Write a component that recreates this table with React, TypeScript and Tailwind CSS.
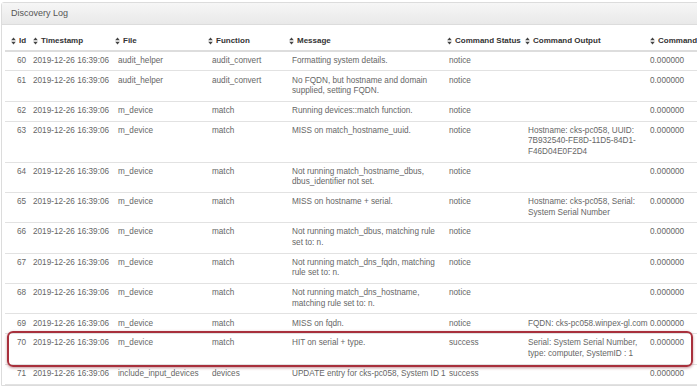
import React from "react";

type Row = {
  id: number;
  file: string;
  fn: string;
  message: string[];
  status: string;
  output?: string[];
  highlight?: boolean;
};

const TS = "2019-12-26 16:39:06";

const rows: Row[] = [
  { id: 60, file: "audit_helper", fn: "audit_convert", message: ["Formatting system details."], status: "notice" },
  {
    id: 61,
    file: "audit_helper",
    fn: "audit_convert",
    message: ["No FQDN, but hostname and domain", "supplied, setting FQDN."],
    status: "notice",
  },
  { id: 62, file: "m_device", fn: "match", message: ["Running devices::match function."], status: "notice" },
  {
    id: 63,
    file: "m_device",
    fn: "match",
    message: ["MISS on match_hostname_uuid."],
    status: "notice",
    output: ["Hostname: cks-pc058, UUID:", "7B932540-FE8D-11D5-84D1-", "F46D04E0F2D4"],
  },
  {
    id: 64,
    file: "m_device",
    fn: "match",
    message: ["Not running match_hostname_dbus,", "dbus_identifier not set."],
    status: "notice",
  },
  {
    id: 65,
    file: "m_device",
    fn: "match",
    message: ["MISS on hostname + serial."],
    status: "notice",
    output: ["Hostname: cks-pc058, Serial:", "System Serial Number"],
  },
  {
    id: 66,
    file: "m_device",
    fn: "match",
    message: ["Not running match_dbus, matching rule", "set to: n."],
    status: "notice",
  },
  {
    id: 67,
    file: "m_device",
    fn: "match",
    message: ["Not running match_dns_fqdn, matching", "rule set to: n."],
    status: "notice",
  },
  {
    id: 68,
    file: "m_device",
    fn: "match",
    message: ["Not running match_dns_hostname,", "matching rule set to: n."],
    status: "notice",
  },
  {
    id: 69,
    file: "m_device",
    fn: "match",
    message: ["MISS on fqdn."],
    status: "notice",
    output: ["FQDN: cks-pc058.winpex-gl.com"],
  },
  {
    id: 70,
    file: "m_device",
    fn: "match",
    message: ["HIT on serial + type."],
    status: "success",
    output: ["Serial: System Serial Number,", "type: computer, SystemID : 1"],
    highlight: true,
  },
  {
    id: 71,
    file: "include_input_devices",
    fn: "devices",
    message: ["UPDATE entry for cks-pc058, System ID 1"],
    status: "success",
  },
];

const headers = ["Id", "Timestamp", "File", "Function", "Message", "Command Status", "Command Output", "Command"];
const headPad = ["pl-[6px]", "pl-[4px]", "pl-[4px]", "pl-[4px]", "pl-[4px]", "pl-[4px]", "pl-[4px]", "pl-[4px]"];

const SortIcon = () => (
  <svg width="5" height="8" viewBox="0 0 5 8" className="shrink-0">
    <path d="M2.5 0.5 L4.8 3.3 L0.2 3.3 Z" fill="#444" />
    <path d="M2.5 7.5 L4.8 4.7 L0.2 4.7 Z" fill="#444" />
  </svg>
);

const Lines = ({ lines }: { lines?: string[] }) => (
  <>
    {(lines || []).map((l, i) => (
      <div key={i} className="whitespace-nowrap">
        {l}
      </div>
    ))}
  </>
);

export default function App() {
  return (
    <div className="w-[697px] h-[387px] overflow-hidden bg-white font-['Liberation_Sans',Arial,sans-serif]">
      <div className="mt-[2px] ml-[1px] w-[790px] border border-[#dcdcdc] rounded-tl-[3px]">
        <div className="h-[22px] flex items-center pl-[9px] bg-gradient-to-b from-[#f6f6f6] to-[#e9e9e9] border-b border-[#dcdcdc] text-[9px] text-[#555]">
          Discovery Log
        </div>
        <div className="px-[3px] pt-[6px]">
          <div className="grid grid-cols-[24px_82px_93px_81px_158px_78px_125px_100px] border-b-2 border-[#dddddd] text-[8px] leading-[10.5px] font-bold text-[#333]">
            {headers.map((h, i) => (
              <div key={h} className={`${headPad[i]} pt-[5px] pb-[3px] flex items-center gap-[3px] whitespace-nowrap`}>
                <SortIcon />
                <span>{h}</span>
              </div>
            ))}
          </div>
          {rows.map((r) => (
            <div
              key={r.id}
              className="relative grid grid-cols-[24px_82px_93px_81px_158px_78px_125px_100px] border-b border-[#e2e2e2] text-[8.2px] leading-[10.5px] text-[#666]"
            >
              <div className="pl-[12px] py-[4.2px]">{r.id}</div>
              <div className="pl-[4px] py-[4.2px] whitespace-nowrap">{TS}</div>
              <div className="pl-[7px] py-[4.2px] whitespace-nowrap">{r.file}</div>
              <div className="pl-[8px] py-[4.2px]">{r.fn}</div>
              <div className="pl-[7px] py-[4.2px]">
                <Lines lines={r.message} />
              </div>
              <div className="pl-[6px] py-[4.2px]">{r.status}</div>
              <div className="pl-[7px] py-[4.2px]">
                <Lines lines={r.output} />
              </div>
              <div className="pl-[4px] py-[4.2px]">0.000000</div>
              {r.highlight && (
                <div className="absolute left-[2px] top-[-3px] bottom-[-3px] w-[686px] rounded-[6px] border-2 border-[#a8303c] shadow-[0_1px_3px_rgba(120,20,30,0.45)]" />
              )}
            </div>
          ))}
        </div>
      </div>
    </div>
  );
}
